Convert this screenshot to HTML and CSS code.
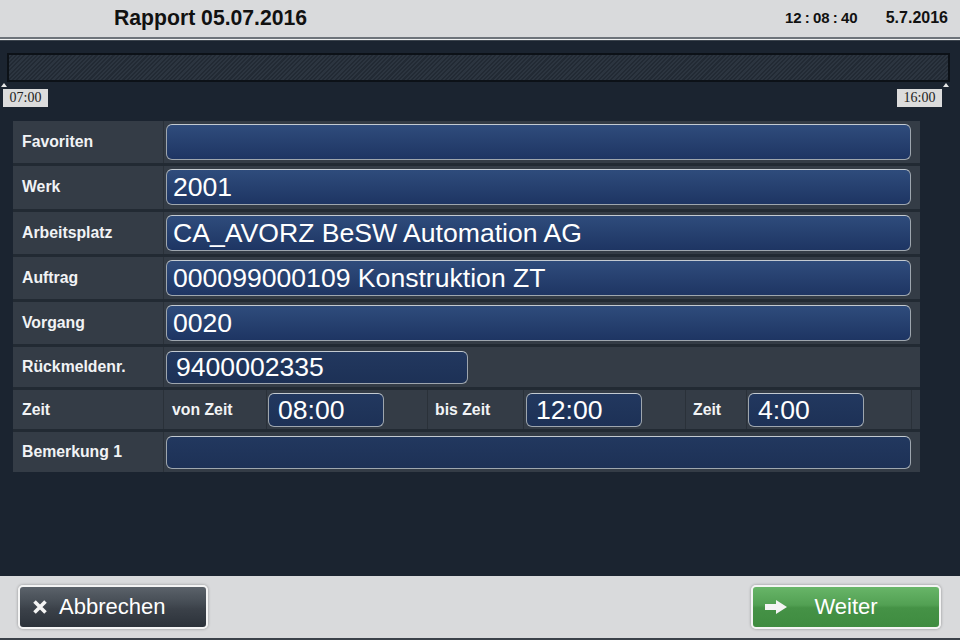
FILE: index.html
```html
<!DOCTYPE html>
<html lang="de">
<head>
<meta charset="utf-8">
<title>Rapport</title>
<link rel="stylesheet" href="styles.css">
</head>
<body>
<div class="app">
  <header class="topbar">
    <h1 class="title">Rapport 05.07.2016</h1>
    <div class="clock">
      <span class="time">12 : 08 : 40</span>
      <span class="date">5.7.2016</span>
    </div>
  </header>
  <main class="content">
    <section class="timeline">
      <div class="track"></div>
      <div class="ticks"><span class="tick"></span><span class="tick"></span></div>
      <div class="tlabels"><span class="tlabel">07:00</span><span class="tlabel">16:00</span></div>
    </section>
    <section class="form">
      <div class="row tall">
        <div class="lbl">Favoriten</div>
        <div class="val"><div class="field grad"></div></div>
      </div>
      <div class="row tall">
        <div class="lbl">Werk</div>
        <div class="val"><div class="field grad">2001</div></div>
      </div>
      <div class="row tall">
        <div class="lbl">Arbeitsplatz</div>
        <div class="val"><div class="field grad">CA_AVORZ BeSW Automation AG</div></div>
      </div>
      <div class="row tall">
        <div class="lbl">Auftrag</div>
        <div class="val"><div class="field grad">000099000109 Konstruktion ZT</div></div>
      </div>
      <div class="row tall">
        <div class="lbl">Vorgang</div>
        <div class="val"><div class="field grad">0020</div></div>
      </div>
      <div class="row short">
        <div class="lbl">Rückmeldenr.</div>
        <div class="val"><div class="field flat num">9400002335</div></div>
      </div>
      <div class="row short">
        <div class="lbl">Zeit</div>
        <div class="cell sub von">von Zeit</div>
        <div class="cell w161"><div class="field flat tm">08:00</div></div>
        <div class="cell sub bis">bis Zeit</div>
        <div class="cell w162"><div class="field flat tm">12:00</div></div>
        <div class="cell sub dur">Zeit</div>
        <div class="cell w165"><div class="field flat tm">4:00</div></div>
        <div class="cell filler"></div>
      </div>
      <div class="row short">
        <div class="lbl">Bemerkung 1</div>
        <div class="val"><div class="field flat low"></div></div>
      </div>
    </section>
  </main>
  <footer class="footbar">
    <button class="btn cancel" type="button">
      <svg class="ico-x" width="16" height="16" viewBox="0 0 16 16"><path d="M2.5 2.5 L13.5 13.5 M13.5 2.5 L2.5 13.5" stroke="#f4f4f4" stroke-width="3.6" stroke-linecap="butt" fill="none"/></svg>
      <span>Abbrechen</span>
    </button>
    <button class="btn next" type="button">
      <svg class="ico-arrow" width="22" height="14" viewBox="0 0 22 14"><polygon points="0,4 11,4 11,0 22,7 11,14 11,10 0,10" fill="#f4f4f4"/></svg>
      <span>Weiter</span>
      <span></span>
    </button>
  </footer>
</div>
</body>
</html>
```

FILE: styles.css
```css
* { box-sizing: border-box; }

html, body {
  margin: 0;
  padding: 0;
  width: 960px;
  height: 640px;
  overflow: hidden;
  background: #1b2430;
  font-family: "Liberation Sans", Arial, sans-serif;
}

.app {
  width: 960px;
  height: 640px;
  display: flex;
  flex-direction: column;
}

/* Header */
.topbar {
  height: 40px;
  flex: none;
  display: flex;
  align-items: center;
  justify-content: space-between;
  background: #d9dadc;
  border-bottom: 1px solid #f0f1f2;
  box-shadow: inset 0 -2px 0 #6d737a;
  padding: 0 12px 3px 114px;
}

.title {
  margin: 0;
  font-size: 21.2px;
  font-weight: bold;
  color: #111;
}

.clock {
  display: flex;
  gap: 28px;
  font-size: 16px;
  font-weight: bold;
  color: #111;
}

.time { word-spacing: -1px; font-size: 15px; }

/* Main */
.content {
  flex: 1;
  background: #1b2430;
  border-top: 1px solid #3c444d;
}

.timeline {
  padding-top: 12px;
}

.track {
  margin: 0 10px 0 7px;
  height: 29px;
  border: 2px solid #0c1117;
  background: repeating-linear-gradient(135deg, #2c3540 0 1.5px, #222a34 1.5px 3px);
}

.ticks {
  height: 7px;
  display: flex;
  justify-content: space-between;
  padding: 1px 11px 0 1px;
}

.tick {
  width: 0;
  height: 0;
  border-left: 3px solid transparent;
  border-right: 3px solid transparent;
  border-bottom: 4px solid #e6e6e6;
}

.tlabels {
  display: flex;
  justify-content: space-between;
  padding: 0 18px 0 3px;
}

.tlabel {
  width: 45px;
  height: 18px;
  line-height: 18px;
  text-align: center;
  background: #dcdcdc;
  color: #222;
  font-family: "Liberation Serif", "Times New Roman", serif;
  font-size: 14px;
}

/* Form */
.form {
  margin: 14px 40px 0 13px;
  width: 907px;
  background: #222a33;
  display: flex;
  flex-direction: column;
  gap: 3px;
}

.row {
  display: flex;
  align-items: stretch;
  background: #343c46;
}

.row.tall { height: 42.3px; }
.row.short { height: 39.5px; }

.lbl {
  width: 150px;
  flex: none;
  display: flex;
  align-items: center;
  padding-left: 9px;
  color: #f1f3f5;
  font-size: 15.8px;
  font-weight: bold;
}

.val {
  flex: 1;
  display: flex;
  align-items: center;
  border-left: 1px solid #2a3139;
  padding: 0 9px 0 2px;
}

.field {
  flex: 1;
  height: 36px;
  border: 1px solid #9ea6ae;
  border-top-color: #c3cad1;
  border-radius: 6px;
  color: #ffffff;
  font-size: 26.6px;
  line-height: 34px;
  padding-left: 6px;
  white-space: nowrap;
  overflow: hidden;
}

.field.grad {
  background: linear-gradient(#2f4c7c, #1e3563);
}

.field.flat {
  background: linear-gradient(#22385f, #1d3156);
  height: 33px;
  line-height: 31px;
}

.field.num {
  flex: none;
  width: 302px;
  padding-left: 9px;
}

.field.low { height: 33px; }

.cell {
  flex: none;
  display: flex;
  align-items: center;
  border-left: 1px solid #2a3139;
}

.sub {
  color: #f1f3f5;
  font-size: 15.8px;
  font-weight: bold;
}

.von { width: 103px; padding-left: 8px; }
.bis { width: 96px; padding-left: 7px; }
.dur { width: 61px; padding-left: 7px; }

.w161 { width: 161px; padding-left: 1px; }
.w162 { width: 162px; padding-left: 2px; }
.w165 { width: 165px; padding-left: 1px; }
.filler { flex: 1; }

.field.tm {
  flex: none;
  width: 116px;
  height: 34px;
  line-height: 32px;
  padding-left: 9px;
}

/* Footer */
.footbar {
  height: 64px;
  flex: none;
  background: #d9dadc;
  border-bottom: 2px solid #3b4149;
  display: flex;
  justify-content: space-between;
  align-items: flex-start;
  padding: 9px 19px 0 18px;
}

.btn {
  width: 190px;
  height: 44px;
  border: 2px solid #f4f4f4;
  border-radius: 5px;
  box-shadow: 0 0 3px rgba(0, 0, 0, 0.35);
  color: #ffffff;
  font-family: "Liberation Sans", Arial, sans-serif;
  font-size: 22px;
  padding: 0 12px;
  margin: 0;
  cursor: pointer;
}

.cancel {
  display: flex;
  align-items: center;
  gap: 11px;
  background: linear-gradient(#5b626a 0%, #454c54 40%, #3b4149 55%, #2c323a 100%);
}

.next {
  display: grid;
  grid-template-columns: 1fr auto 1fr;
  align-items: center;
  background: linear-gradient(#68b568 0%, #52a053 45%, #459246 52%, #3f8c40 100%);
}

.ico-x, .ico-arrow { display: block; }
```
